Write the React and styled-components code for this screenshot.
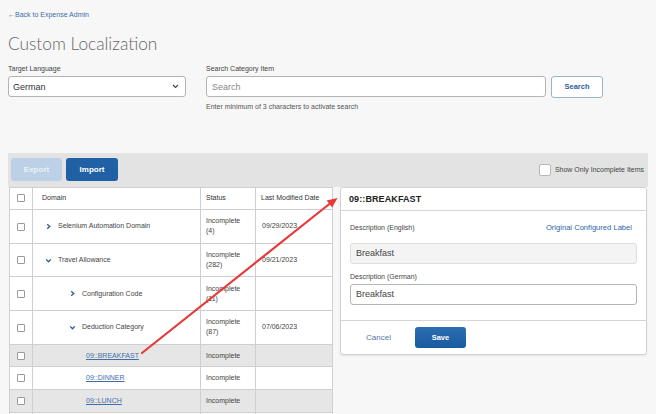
import React from "react";
import styled, { createGlobalStyle } from "styled-components";

const Global = createGlobalStyle`
  html, body { margin: 0; padding: 0; overflow: hidden; }
  body {
    background: #f7f7f7;
    font-family: "Liberation Sans", Arial, sans-serif;
    color: #444;
  }
  * { box-sizing: border-box; }
`;

const Page = styled.div`
  position: relative;
  width: 656px;
  height: 414px;
  padding: 0 8px;
  overflow: hidden;
`;

const BackLink = styled.a`
  display: block;
  padding-top: 11px;
  font-size: 7px;
  line-height: 8px;
  color: #3c6ea8;
  text-decoration: none;
`;

const Title = styled.h1`
  margin: 14px 0 0;
  font-family: Lato, "Open Sans", sans-serif;
  font-weight: 300;
  font-size: 17.3px;
  line-height: 22px;
  color: #666;
`;

const FormRow = styled.div`
  display: flex;
  gap: 20px;
  margin-top: 9px;
`;

const Field = styled.div`
  display: flex;
  flex-direction: column;
  width: ${(p) => p.$w}px;
`;

const Label = styled.label`
  font-size: 7px;
  line-height: 9px;
  color: #444;
  margin-bottom: 3px;
`;

const SelectBox = styled.div`
  display: flex;
  align-items: center;
  justify-content: space-between;
  height: 21px;
  padding: 0 6px 0 4px;
  background: #fff;
  border: 1px solid #b3b3b3;
  border-radius: 3px;
  font-size: 9px;
  color: #333;
`;

const SearchLine = styled.div`
  display: flex;
  gap: 5px;
`;

const TextInput = styled.input`
  display: block;
  height: 21px;
  width: ${(p) => (p.$w ? `${p.$w}px` : "100%")};
  padding: 0 5px;
  border: 1px solid ${(p) => (p.$disabled ? "#dedede" : "#b3b3b3")};
  border-radius: 3px;
  background: ${(p) => (p.$disabled ? "#f4f4f4" : "#fff")};
  font-family: "Liberation Sans", Arial, sans-serif;
  font-size: 9px;
  color: #444;
  outline: none;
  &::placeholder { color: #8a8a8a; }
`;

const OutlineButton = styled.button`
  height: 22px;
  width: 52px;
  margin-top: -0.5px;
  border: 1px solid #9db2c9;
  border-radius: 3px;
  background: #fff;
  color: #2d5f95;
  font-family: "Liberation Sans", Arial, sans-serif;
  font-weight: bold;
  font-size: 7.5px;
  padding: 0;
`;

const Hint = styled.div`
  margin-top: 5px;
  font-size: 7px;
  line-height: 8px;
  color: #555;
`;

const Band = styled.div`
  margin-top: 42px;
  height: 34px;
  background: #e3e3e3;
  display: flex;
  align-items: center;
  justify-content: space-between;
  padding: 0 4px 0 3px;
`;

const BtnGroup = styled.div`
  display: flex;
  gap: 4px;
`;

const SolidButton = styled.button`
  height: 23px;
  width: ${(p) => p.$w}px;
  border: none;
  border-radius: 3px;
  background: ${(p) => (p.$disabled ? "#bcd1e5" : "#1f61a4")};
  color: ${(p) => (p.$disabled ? "#e9f0f7" : "#fff")};
  font-family: "Liberation Sans", Arial, sans-serif;
  font-weight: bold;
  font-size: 8px;
  padding: 0;
`;

const CheckLabel = styled.label`
  display: flex;
  align-items: center;
  gap: 4px;
  font-size: 7px;
  color: #444;
`;

const BigBox = styled.span`
  display: inline-block;
  width: 12px;
  height: 12px;
  background: #fff;
  border: 1px solid #b8b8b8;
  border-radius: 2px;
`;

const Main = styled.div`
  display: flex;
  align-items: flex-start;
`;

const TableWrap = styled.div`
  margin-left: 1px;
  width: 323px;
  background: #fff;
`;

const Table = styled.table`
  border-collapse: collapse;
  width: 323px;
  table-layout: fixed;
  font-size: 7px;
  line-height: 10px;
  color: #444;
`;

const Row = styled.tr`
  height: ${(p) => (p.$tall ? 33.7 : 22.6)}px;
  background: ${(p) => (p.$shade ? "#e6e6e6" : "#fff")};
`;

const Th = styled.th`
  height: 22.5px;
  border: 1px solid #cfcfcf;
  text-align: ${(p) => (p.$center ? "center" : "left")};
  font-weight: normal;
  color: #333;
  padding: 0 0 0 ${(p) => p.$pl ?? 5}px;
  width: ${(p) => p.$w}px;
`;

const Td = styled.td`
  border: 1px solid #cfcfcf;
  padding: 0 0 0 ${(p) => p.$pl ?? 5}px;
  text-align: ${(p) => (p.$center ? "center" : "left")};
  vertical-align: middle;
`;

const SmallBox = styled.span`
  display: inline-block;
  vertical-align: middle;
  width: 8px;
  height: 8px;
  background: #fff;
  border: 1px solid #9a9a9a;
  border-radius: 1px;
`;

const DomainCell = styled.div`
  display: flex;
  align-items: center;
  padding-left: ${(p) => p.$indent}px;
`;

const Chev = styled.svg`
  width: 7px;
  height: 7px;
  margin-right: 6px;
  flex: none;
`;

const ItemLink = styled.a`
  color: #3f6ea8;
  text-decoration: underline;
`;

const Count = styled.span`
  display: block;
`;

const Panel = styled.div`
  margin-left: 8px;
  width: 307px;
  background: #fff;
  border: 1px solid #d2d2d2;
  border-radius: 3px;
  box-shadow: 0 1px 2px rgba(0, 0, 0, 0.08);
`;

const PanelHead = styled.div`
  height: 23px;
  display: flex;
  align-items: center;
  padding-left: 8px;
  border-bottom: 1px solid #d5d5d5;
  font-size: 9px;
  font-weight: bold;
  color: #222;
  letter-spacing: 0.1px;
`;

const PanelBody = styled.div`
  padding: 11px 9px 15px 9px;
`;

const LabelRow = styled.div`
  display: flex;
  justify-content: space-between;
  align-items: center;
  height: 10px;
  margin-bottom: ${(p) => p.$mb}px;
  margin-top: ${(p) => p.$mt ?? 0}px;
  font-size: 7px;
  color: #444;
`;

const ConfigLink = styled.a`
  font-size: 7.6px;
  color: #2c65a8;
  padding-right: 5px;
`;

const PanelFoot = styled.div`
  height: 34px;
  border-top: 1px solid #d5d5d5;
  display: flex;
  align-items: center;
  padding-left: 25px;
  gap: 24px;
`;

const CancelBtn = styled.button`
  border: none;
  background: none;
  padding: 0;
  font-family: "Liberation Sans", Arial, sans-serif;
  font-size: 8px;
  color: #4f78a6;
`;

const SaveBtn = styled.button`
  width: 51px;
  height: 21px;
  border: none;
  border-radius: 3px;
  background: linear-gradient(#2a6fb3, #1a5a9c);
  color: #fff;
  font-family: "Liberation Sans", Arial, sans-serif;
  font-weight: bold;
  font-size: 7.5px;
  padding: 0;
`;

const Overlay = styled.svg`
  position: absolute;
  left: 0;
  top: 0;
  width: 656px;
  height: 414px;
  pointer-events: none;
`;

const Right = () => (
  <Chev viewBox="0 0 7 7">
    <polyline points="2.2,1.2 4.8,3.5 2.2,5.8" fill="none" stroke="#2b5a96" strokeWidth="1.3" />
  </Chev>
);
const Down = () => (
  <Chev viewBox="0 0 7 7">
    <polyline points="1.2,2.4 3.5,4.8 5.8,2.4" fill="none" stroke="#2b5a96" strokeWidth="1.3" />
  </Chev>
);

const rows = [
  { name: "Selenium Automation Domain", icon: "right", indent: 12, status: "Incomplete", count: "(4)", date: "09/29/2023", tall: true },
  { name: "Travel Allowance", icon: "down", indent: 12, status: "Incomplete", count: "(282)", date: "09/21/2023", tall: true },
  { name: "Configuration Code", icon: "right", indent: 36, status: "Incomplete", count: "(11)", date: "", tall: true },
  { name: "Deduction Category", icon: "down", indent: 36, status: "Incomplete", count: "(87)", date: "07/06/2023", tall: true },
  { name: "09::BREAKFAST", link: true, indent: 53, status: "Incomplete", shade: true },
  { name: "09::DINNER", link: true, indent: 53, status: "Incomplete" },
  { name: "09::LUNCH", link: true, indent: 53, status: "Incomplete", shade: true },
  { name: "", indent: 53, status: "" },
];

export default function App() {
  return (
    <>
      <Global />
      <Page>
        <BackLink href="#">←Back to Expense Admin</BackLink>
        <Title>Custom Localization</Title>
        <FormRow>
          <Field $w={178}>
            <Label>Target Language</Label>
            <SelectBox>
              <span>German</span>
              <svg width="7" height="5" viewBox="0 0 7 5">
                <polyline points="1,1 3.5,3.5 6,1" fill="none" stroke="#444" strokeWidth="1.1" />
              </svg>
            </SelectBox>
          </Field>
          <Field $w={397}>
            <Label>Search Category Item</Label>
            <SearchLine>
              <TextInput $w={340} placeholder="Search" />
              <OutlineButton>Search</OutlineButton>
            </SearchLine>
            <Hint>Enter minimum of 3 characters to activate search</Hint>
          </Field>
        </FormRow>
        <Band>
          <BtnGroup>
            <SolidButton $w={51} $disabled>Export</SolidButton>
            <SolidButton $w={52}>Import</SolidButton>
          </BtnGroup>
          <CheckLabel>
            <BigBox />
            Show Only Incomplete Items
          </CheckLabel>
        </Band>
        <Main>
          <TableWrap>
            <Table>
              <thead>
                <tr>
                  <Th $w={23} $center $pl={0}><SmallBox /></Th>
                  <Th $w={168} $pl={9}>Domain</Th>
                  <Th $w={55}>Status</Th>
                  <Th $w={77}>Last Modified Date</Th>
                </tr>
              </thead>
              <tbody>
                {rows.map((r, i) => (
                  <Row key={i} $tall={r.tall} $shade={r.shade}>
                    <Td $center $pl={0}><SmallBox /></Td>
                    <Td $pl={0}>
                      <DomainCell $indent={r.indent}>
                        {r.icon === "right" && <Right />}
                        {r.icon === "down" && <Down />}
                        {r.link ? <ItemLink href="#">{r.name}</ItemLink> : <span>{r.name}</span>}
                      </DomainCell>
                    </Td>
                    <Td>
                      {r.status}
                      {r.count && <Count>{r.count}</Count>}
                    </Td>
                    <Td $pl={6}>{r.date}</Td>
                  </Row>
                ))}
              </tbody>
            </Table>
          </TableWrap>
          <Panel>
            <PanelHead>09::BREAKFAST</PanelHead>
            <PanelBody>
              <LabelRow $mb={10} $mt={1}>
                <span>Description (English)</span>
                <ConfigLink>Original Configured Label</ConfigLink>
              </LabelRow>
              <TextInput $disabled readOnly value="Breakfast" />
              <LabelRow $mb={2} $mt={8}>
                <span>Description (German)</span>
              </LabelRow>
              <TextInput readOnly value="Breakfast" />
            </PanelBody>
            <PanelFoot>
              <CancelBtn>Cancel</CancelBtn>
              <SaveBtn>Save</SaveBtn>
            </PanelFoot>
          </Panel>
        </Main>
        <Overlay viewBox="0 0 656 414">
          <line x1="142" y1="353" x2="330" y2="203.5" stroke="#e63a3a" strokeWidth="2.2" strokeLinecap="round" />
          <polygon points="337.5,198 332.2,207.6 326.6,200.6" fill="#e63a3a" />
        </Overlay>
      </Page>
    </>
  );
}
